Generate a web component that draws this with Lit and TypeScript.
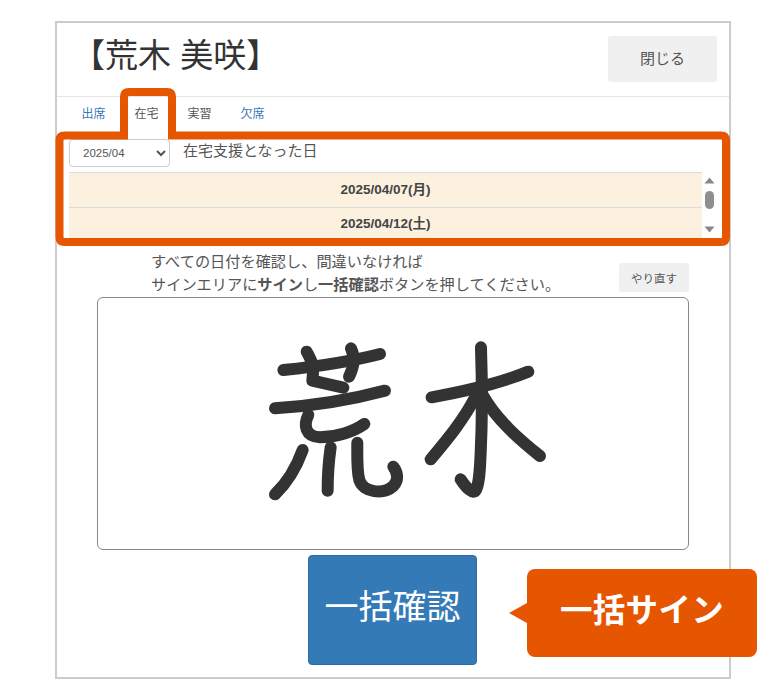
import { LitElement, html, css, svg } from "lit";
import { customElement } from "lit/decorators.js";

const FONT = `"Liberation Sans", "Noto Sans CJK JP", sans-serif`;

const STROKES = [
  "M130 150 C230 140 330 125 420 102",
  "M200 95 C212 118 222 135 219 160 L217 182 L310 203",
  "M333 85 C345 110 345 135 327 170",
  "M105 265 C220 258 330 240 435 212",
  "M205 285 C190 315 195 350 240 352 C290 352 340 335 373 312",
  "M188 390 C170 440 145 485 105 523",
  "M272 382 C265 430 263 470 263 512",
  "M352 368 C352 410 350 450 358 480 C370 518 430 525 460 498 C478 480 472 455 460 440",
  "M723 82 C727 200 727 300 722 400 C720 450 718 490 708 510 C700 525 680 505 662 478",
  "M575 232 C670 215 780 190 865 155",
  "M704 235 C670 300 625 355 572 418",
  "M728 225 C770 300 840 360 900 408",
];

@customElement("app-root")
export class AppRoot extends LitElement {
  static styles = css`
    :host {
      display: block;
      position: relative;
      width: 784px;
      height: 700px;
      background: #fff;
      overflow: hidden;
      font-family: ${css([FONT] as any as TemplateStringsArray)};
      color: #555;
    }
    * { box-sizing: border-box; }
    .dialog {
      margin: 21px 0 0 55px;
      width: 676px;
      height: 658px;
      border: 2px solid #ccc;
      background: #fff;
      display: flex;
      flex-direction: column;
    }
    .header {
      height: 74px;
      flex: none;
      border-bottom: 1px solid #e5e5e5;
      display: flex;
      justify-content: space-between;
      align-items: flex-start;
      padding: 13px 12px 0 15px;
    }
    .title {
      margin: -2px 0 0;
      font-size: 33px;
      font-weight: 400;
      line-height: 44px;
      color: #333;
    }
    .btn-grey {
      border: none;
      background: #f0f0f0;
      border-radius: 3px;
      color: #555;
      font-family: inherit;
      padding: 0;
    }
    .close { width: 109px; height: 46px; font-size: 15px; padding-bottom: 4px; }
    .tabs {
      height: 42px;
      flex: none;
      display: flex;
      padding: 5px 0 0 10px;
      font-size: 12px;
      line-height: 24px;
    }
    .tab { width: 53px; text-align: center; color: #555; }
    .tab.link { color: #337ab7; }
    .filter {
      height: 28px;
      flex: none;
      margin: 0 0 5px 12px;
      display: flex;
      align-items: center;
      gap: 13px;
    }
    select {
      width: 101px;
      height: 28px;
      font: 11.5px ${css([FONT] as any as TemplateStringsArray)};
      color: #555;
      background: #fff;
      border: 1px solid #ccc;
      border-radius: 4px;
      padding-left: 9px;
    }
    .filter-label { font-size: 15px; line-height: 24px; margin-top: -4px; }
    .list {
      height: 68px;
      flex: none;
      margin: 0 12px 0 12px;
      display: flex;
      overflow: hidden;
    }
    .rows { flex: 1; min-width: 0; }
    .row {
      height: 35px;
      background: #fcf0de;
      border-top: 1px solid #d9dcdc;
      font-size: 13.5px;
      font-weight: 700;
      line-height: 33px;
      text-align: center;
      color: #444;
    }
    .row + .row { line-height: 31px; }
    .scroll {
      width: 15px;
      flex: none;
      display: flex;
      flex-direction: column;
      align-items: center;
      padding-top: 5px;
    }
    .arrow { display: block; width: 11px; height: 7px; fill: #888; }
    .thumb { width: 9px; height: 18px; border-radius: 5px; background: #8f8f8f; margin: 7px 0 17px; }
    .notes {
      height: 47px;
      flex: none;
      margin-top: 10px;
      padding: 0 40px 0 94px;
      display: flex;
      justify-content: space-between;
      align-items: flex-start;
    }
    .notes p { margin: 0; font-size: 15.2px; line-height: 23px; white-space: nowrap; }
    .retry { width: 70px; height: 29px; margin-top: 13px; font-size: 11.5px; }
    .canvas {
      flex: none;
      height: 253px;
      margin: 0 40px;
      border: 1px solid #888;
      border-radius: 6px;
      background: #fff;
    }
    .canvas svg { display: block; width: 100%; height: 100%; }
    .confirm-wrap { flex: none; display: flex; justify-content: center; margin-top: 5px; padding-right: 1px; }
    .confirm {
      width: 169px;
      height: 110px;
      background: #337ab7;
      border: 1px solid #2e6da4;
      border-radius: 4px;
      color: #fff;
      font: 34px ${css([FONT] as any as TemplateStringsArray)};
      padding: 0 0 11px;
    }
    .outline { position: absolute; left: 0; top: 0; pointer-events: none; }
    .callout {
      position: absolute;
      left: 527px;
      top: 569px;
      width: 230px;
      height: 88px;
      padding-bottom: 11px;
      background: #e65500;
      border-radius: 8px;
      color: #fff;
      font-size: 32.5px;
      font-weight: 700;
      display: flex;
      align-items: center;
      justify-content: center;
      letter-spacing: 0.3px;
    }
    .callout::before {
      content: "";
      position: absolute;
      left: -18px;
      top: 34px;
      border-style: solid;
      border-width: 10px 18px 10px 0;
      border-color: transparent #e65500 transparent transparent;
    }
  `;

  render() {
    return html`
      <div class="dialog">
        <div class="header">
          <h1 class="title">【荒木 美咲】</h1>
          <button class="btn-grey close">閉じる</button>
        </div>
        <div class="tabs">
          <div class="tab link">出席</div>
          <div class="tab">在宅</div>
          <div class="tab">実習</div>
          <div class="tab link">欠席</div>
        </div>
        <div class="filter">
          <select><option>2025/04</option></select>
          <span class="filter-label">在宅支援となった日</span>
        </div>
        <div class="list">
          <div class="rows">
            <div class="row">2025/04/07(月)</div>
            <div class="row">2025/04/12(土)</div>
          </div>
          <div class="scroll">
            <svg class="arrow" viewBox="0 0 11 7"><path d="M5.5 0.5 L10.5 6.5 H0.5 Z"></path></svg>
            <div class="thumb"></div>
            <svg class="arrow" viewBox="0 0 11 7"><path d="M0.5 0.5 H10.5 L5.5 6.5 Z"></path></svg>
          </div>
        </div>
        <div class="notes">
          <p>すべての日付を確認し、間違いなければ<br />サインエリアに<b>サイン</b>し<b>一括確認</b>ボタンを押してください。</p>
          <button class="btn-grey retry">やり直す</button>
        </div>
        <div class="canvas">
          <svg viewBox="0 0 590 251">
            <g transform="translate(142 22) scale(0.3333)" fill="none" stroke="#333" stroke-width="36" stroke-linecap="round" stroke-linejoin="round">
              ${STROKES.map((d) => svg`<path d=${d}></path>`)}
            </g>
          </svg>
        </div>
        <div class="confirm-wrap"><button class="confirm">一括確認</button></div>
      </div>
      <svg class="outline" width="784" height="700" viewBox="0 0 784 700">
        <path d="M124 135.5 V97 Q124 92 129 92 H167 Q172 92 172 97 V135.5 H721 Q726 135.5 726 140.5 V237 Q726 242 721 242 H64.5 Q59.5 242 59.5 237 V140.5 Q59.5 135.5 64.5 135.5 Z" fill="none" stroke="#e65500" stroke-width="8"></path>
      </svg>
      <div class="callout">一括サイン</div>
    `;
  }
}
